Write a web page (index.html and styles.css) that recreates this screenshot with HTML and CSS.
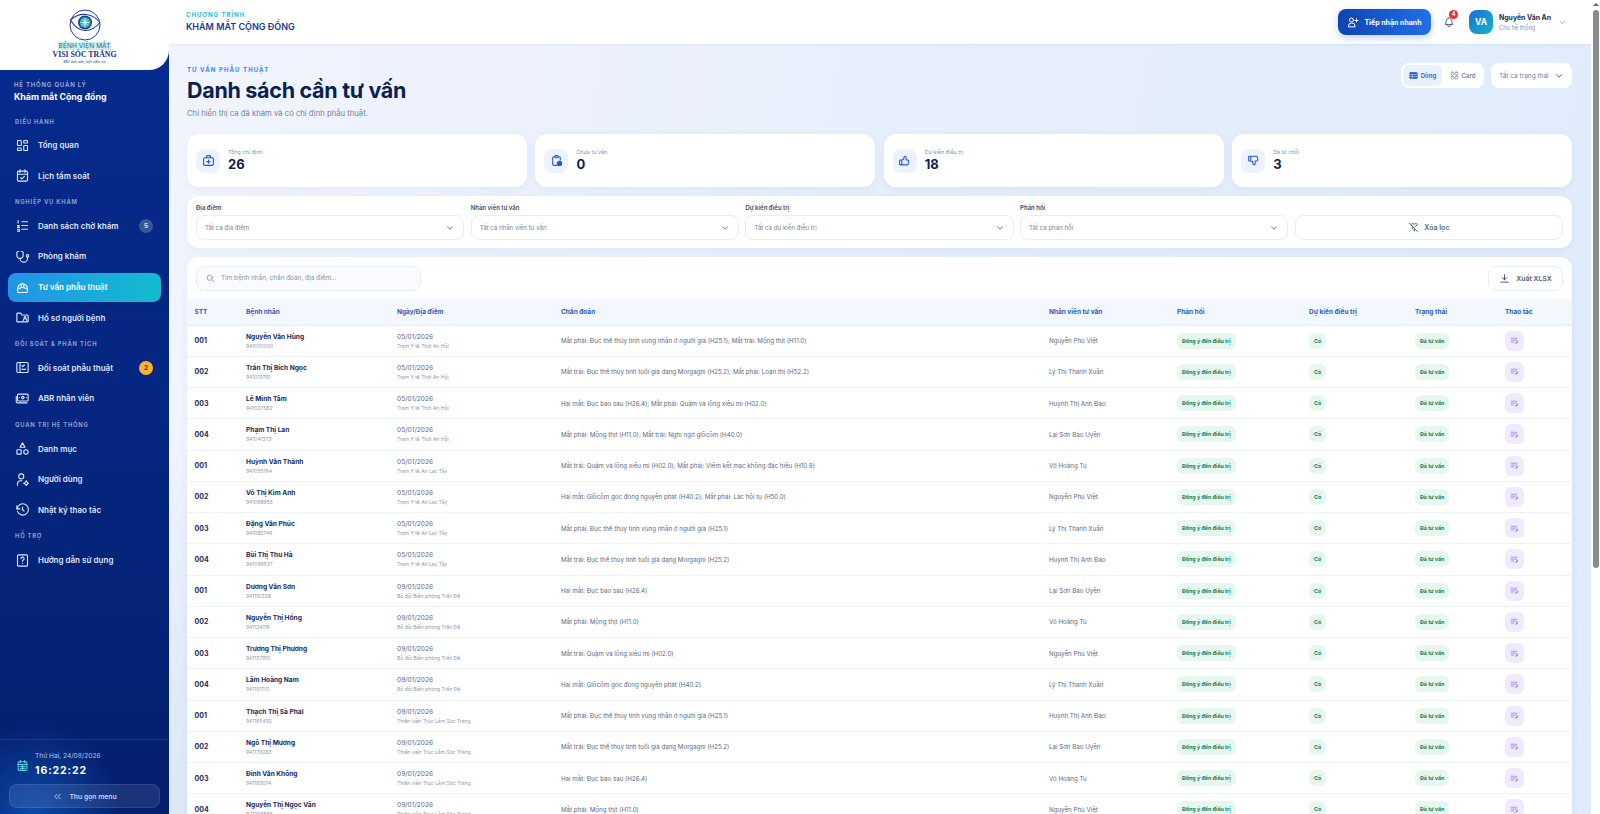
FILE: index.html
```html
<!DOCTYPE html>
<html lang="vi">
<head>
    <meta charset="UTF-8">
    <title>Danh sách cần tư vấn | Khám mắt Cộng đồng</title>
    <link rel="stylesheet" href="styles.css">
</head>
<body>
<svg class="sprite" xmlns="http://www.w3.org/2000/svg">
    <symbol id="i-dash" viewBox="0 0 24 24"><rect x="4" y="4" width="6" height="8" rx="1"/><rect x="14" y="4" width="6" height="4" rx="1"/><rect x="14" y="12" width="6" height="8" rx="1"/><rect x="4" y="16" width="6" height="4" rx="1"/></symbol>
    <symbol id="i-cal" viewBox="0 0 24 24"><rect x="4" y="5" width="16" height="16" rx="2"/><path d="M8 3v4M16 3v4M4 10h16M9 15.500l2 2 4-4"/></symbol>
    <symbol id="i-calgrid" viewBox="0 0 24 24"><rect x="4" y="5" width="16" height="16" rx="2"/><path d="M8 3v4M16 3v4M4 10h16M8 14h8M8 17.500h8M12 12v7"/></symbol>
    <symbol id="i-list" viewBox="0 0 24 24"><path d="M11 6h9M11 12h9M11 18h9M5 4v4M4 12h3l-3 3h3M4 18h3v3H4"/></symbol>
    <symbol id="i-steth" viewBox="0 0 24 24"><path d="M6 4H5a2 2 0 0 0-2 2v4a5 5 0 0 0 10 0V6a2 2 0 0 0-2-2h-1"/><path d="M8 15a6 6 0 0 0 12 0v-2"/><circle cx="20" cy="11" r="2"/></symbol>
    <symbol id="i-surg" viewBox="0 0 24 24"><path d="M5 20a8 8 0 0 1-1-5c0-5 3.500-9 8-9s8 4 8 9a8 8 0 0 1-1 5"/><path d="M4 15c3-2 5-3 8-3s5 1 8 3"/><path d="M5 20h14M10 6v6M14 6v6"/></symbol>
    <symbol id="i-folder" viewBox="0 0 24 24"><path d="M4 5h5l2 3h9a1 1 0 0 1 1 1v9a1 1 0 0 1-1 1H4a1 1 0 0 1-1-1V6a1 1 0 0 1 1-1z"/><circle cx="16" cy="12" r="1.500"/><path d="M13 17a3 3 0 0 1 6 0"/></symbol>
    <symbol id="i-audit" viewBox="0 0 24 24"><rect x="3" y="4" width="18" height="16" rx="1.500"/><path d="M8 4v16M11 9l1.500 1.500L15 8M11 15h6"/></symbol>
    <symbol id="i-cash" viewBox="0 0 24 24"><rect x="4" y="5" width="17" height="11" rx="1.500"/><circle cx="12.500" cy="10.500" r="2"/><path d="M7 10.500h.01M18 10.500h.01M2 9v8a2 2 0 0 0 2 2h15"/></symbol>
    <symbol id="i-cat" viewBox="0 0 24 24"><path d="M12 3l4 7H8z"/><rect x="3" y="14" width="7" height="7" rx="1"/><circle cx="17.500" cy="17.500" r="3.500"/></symbol>
    <symbol id="i-usercog" viewBox="0 0 24 24"><circle cx="10" cy="7" r="4"/><path d="M4 21v-2a5 5 0 0 1 5-5h2"/><circle cx="18" cy="18" r="2.500"/><path d="M18 13.500v2M18 20.500v1M13.500 18h2M20.500 18h1"/></symbol>
    <symbol id="i-hist" viewBox="0 0 24 24"><path d="M12 8v4l2.500 2.500"/><path d="M3.500 11a9 9 0 1 1 .5 4"/><path d="M3 6v5h5"/></symbol>
    <symbol id="i-help" viewBox="0 0 24 24"><rect x="4" y="3" width="16" height="18" rx="1.500"/><path d="M9.500 9a2.500 2.500 0 1 1 3.800 2.200c-.8.500-1.300 1-1.300 2M12 16.500h.01"/></symbol>
    <symbol id="i-userplus" viewBox="0 0 24 24"><circle cx="9" cy="8" r="4"/><path d="M3 21v-1a6 6 0 0 1 6-6h1a6 6 0 0 1 6 6v1zM19 6v6M16 9h6"/></symbol>
    <symbol id="i-bell" viewBox="0 0 24 24"><path d="M10 5a2 2 0 1 1 4 0 7 7 0 0 1 4 6v3a4 4 0 0 0 2 3H4a4 4 0 0 0 2-3v-3a7 7 0 0 1 4-6M9 17v1a3 3 0 0 0 6 0v-1"/></symbol>
    <symbol id="i-down" viewBox="0 0 24 24"><path d="M6 9l6 6 6-6"/></symbol>
    <symbol id="i-dbl" viewBox="0 0 24 24"><path d="M11 7l-5 5 5 5M18 7l-5 5 5 5"/></symbol>
    <symbol id="i-case" viewBox="0 0 24 24"><rect x="3" y="7" width="18" height="14" rx="2"/><path d="M8 7V5a2 2 0 0 1 2-2h4a2 2 0 0 1 2 2v2M12 11v6M9 14h6"/></symbol>
    <symbol id="i-clock" viewBox="0 0 24 24"><path d="M9 5H7a2 2 0 0 0-2 2v12a2 2 0 0 0 2 2h5M15 5h2a2 2 0 0 1 2 2v4"/><rect x="9" y="3" width="6" height="4" rx="1.500"/><circle cx="17.500" cy="17.500" r="4" fill="currentColor"/></symbol>
    <symbol id="i-up" viewBox="0 0 24 24"><path d="M7 11v9H4a1 1 0 0 1-1-1v-7a1 1 0 0 1 1-1h3a4 4 0 0 0 4-4V6a2 2 0 0 1 4 0v5h3a2 2 0 0 1 2 2l-1 5a2 3 0 0 1-2 2h-7a3 3 0 0 1-3-3"/></symbol>
    <symbol id="i-thdown" viewBox="0 0 24 24"><path d="M7 13V4H4a1 1 0 0 0-1 1v7a1 1 0 0 0 1 1h3a4 4 0 0 1 4 4v1a2 2 0 0 0 4 0v-5h3a2 2 0 0 0 2-2l-1-5a2 3 0 0 0-2-2h-7a3 3 0 0 0-3 3"/></symbol>
    <symbol id="i-filteroff" viewBox="0 0 24 24"><path d="M8 4h12v2l-5 5.500M12 12.500l-3-3.500-4-5M9.500 11.500V15l5 5v-6M3 3l18 18"/></symbol>
    <symbol id="i-search" viewBox="0 0 24 24"><circle cx="10" cy="10" r="7"/><path d="M21 21l-6-6"/></symbol>
    <symbol id="i-dl" viewBox="0 0 24 24"><path d="M4 20h16M12 4v11M7 10l5 5 5-5"/></symbol>
    <symbol id="i-table" viewBox="0 0 24 24"><rect x="2" y="4" width="20" height="16" rx="2" fill="currentColor"/><path d="M2 9.500h20M2 14.500h20M8.500 9.500V20" stroke="#e9f1fe" stroke-width="1.200"/></symbol>
    <symbol id="i-grid" viewBox="0 0 24 24"><rect x="3" y="3" width="7.500" height="7.500" rx="3"/><rect x="13.500" y="3" width="7.500" height="7.500" rx="3"/><rect x="3" y="13.500" width="7.500" height="7.500" rx="3"/><rect x="13.500" y="13.500" width="7.500" height="7.500" rx="3"/></symbol>
    <symbol id="i-note" viewBox="0 0 24 24"><path d="M3 6h15M3 11h15M3 16h7"/><path d="M14 21l.8-3.200 5-5 2.400 2.400-5 5z" fill="currentColor" stroke="none"/></symbol>
</svg>
<div class="app">
    <aside class="sidebar">
        <div class="logo">
            <svg class="logo-mark" viewBox="0 0 32 32">
                <circle cx="16" cy="16" r="15" fill="none" stroke="#1f3a9e" stroke-width="1"/>
                <path d="M1.500 11C7 6 12 5 17 5.500c5 .5 10 3 14 8-4 5-9 8-15 8C10 21.500 5 17 1.500 11z" fill="#fff" stroke="#1f3a9e" stroke-width="1.100"/>
                <circle cx="16" cy="13.500" r="7" fill="#1f3a9e"/>
                <circle cx="16" cy="13.500" r="5.400" fill="#22b8a6"/>
                <path d="M16 9v9M11.500 13.500h9M13 10.500l6 6M19 10.500l-6 6" stroke="#fff" stroke-width=".9"/>
            </svg>
            <div class="logo-top">BỆNH VIỆN MẮT</div>
            <div class="logo-name">VISI SÓC TRĂNG</div>
            <div class="logo-tag">Mỗi ánh mắt, một niềm tin</div>
        </div>
        <div class="brand">
            <div class="brand-sub">HỆ THỐNG QUẢN LÝ</div>
            <div class="brand-name">Khám mắt Cộng đồng</div>
        </div>
        <nav class="nav">
            <div class="nav-title">ĐIỀU HÀNH</div>
            <a class="nav-item"><svg class="ic"><use href="#i-dash"/></svg>Tổng quan</a>
            <a class="nav-item"><svg class="ic"><use href="#i-cal"/></svg>Lịch tầm soát</a>
            <div class="nav-title">NGHIỆP VỤ KHÁM</div>
            <a class="nav-item"><svg class="ic"><use href="#i-list"/></svg>Danh sách chờ khám<span class="count">5</span></a>
            <a class="nav-item"><svg class="ic"><use href="#i-steth"/></svg>Phòng khám</a>
            <a class="nav-item active"><svg class="ic"><use href="#i-surg"/></svg>Tư vấn phẫu thuật</a>
            <a class="nav-item"><svg class="ic"><use href="#i-folder"/></svg>Hồ sơ người bệnh</a>
            <div class="nav-title">ĐỐI SOÁT &amp; PHÂN TÍCH</div>
            <a class="nav-item"><svg class="ic"><use href="#i-audit"/></svg>Đối soát phẫu thuật<span class="count warn">2</span></a>
            <a class="nav-item"><svg class="ic"><use href="#i-cash"/></svg>ABR nhân viên</a>
            <div class="nav-title">QUẢN TRỊ HỆ THỐNG</div>
            <a class="nav-item"><svg class="ic"><use href="#i-cat"/></svg>Danh mục</a>
            <a class="nav-item"><svg class="ic"><use href="#i-usercog"/></svg>Người dùng</a>
            <a class="nav-item"><svg class="ic"><use href="#i-hist"/></svg>Nhật ký thao tác</a>
            <div class="nav-title">HỖ TRỢ</div>
            <a class="nav-item"><svg class="ic"><use href="#i-help"/></svg>Hướng dẫn sử dụng</a>
        </nav>
        <div class="side-foot">
            <div class="clock">
                <svg class="ic clock-ic"><use href="#i-calgrid"/></svg>
                <div>
                    <div class="clock-date">Thứ Hai, 24/08/2026</div>
                    <div class="clock-time">16:22:22</div>
                </div>
            </div>
            <button class="collapse"><svg class="ic"><use href="#i-dbl"/></svg>Thu gọn menu</button>
        </div>
    </aside>

    <main class="main">
        <header class="topbar">
            <div>
                <div class="prog-sub">CHƯƠNG TRÌNH</div>
                <div class="prog-name">KHÁM MẮT CỘNG ĐỒNG</div>
            </div>
            <div class="top-right">
                <button class="quick"><svg class="ic"><use href="#i-userplus"/></svg>Tiếp nhận nhanh</button>
                <div class="bell"><svg class="ic"><use href="#i-bell"/></svg><span class="bell-badge">4</span></div>
                <div class="avatar">VA</div>
                <div class="user">
                    <div class="user-name">Nguyễn Văn An</div>
                    <div class="user-role">Chủ hệ thống</div>
                </div>
                <svg class="ic user-caret"><use href="#i-down"/></svg>
            </div>
        </header>

        <div class="content">
            <div class="page-head">
                <div>
                    <div class="eyebrow">TƯ VẤN PHẪU THUẬT</div>
                    <h1>Danh sách cần tư vấn</h1>
                    <p class="lead">Chỉ hiển thị ca đã khám và có chỉ định phẫu thuật.</p>
                </div>
                <div class="head-tools">
                    <div class="toggle">
                        <span class="tg on"><svg class="ic"><use href="#i-table"/></svg>Dòng</span>
                        <span class="tg"><svg class="ic"><use href="#i-grid"/></svg>Card</span>
                    </div>
                    <div class="status-sel">Tất cả trạng thái<svg class="ic"><use href="#i-down"/></svg></div>
                </div>
            </div>

            <section class="stats">
                <div class="stat"><span class="stat-ic"><svg class="ic"><use href="#i-case"/></svg></span><div><div class="stat-label">Tổng chỉ định</div><div class="stat-val">26</div></div></div>
                <div class="stat"><span class="stat-ic"><svg class="ic"><use href="#i-clock"/></svg></span><div><div class="stat-label">Chưa tư vấn</div><div class="stat-val">0</div></div></div>
                <div class="stat"><span class="stat-ic"><svg class="ic"><use href="#i-up"/></svg></span><div><div class="stat-label">Dự kiến điều trị</div><div class="stat-val">18</div></div></div>
                <div class="stat"><span class="stat-ic"><svg class="ic"><use href="#i-thdown"/></svg></span><div><div class="stat-label">Đã từ chối</div><div class="stat-val">3</div></div></div>
            </section>

            <section class="filters">
                <div><label>Địa điểm</label><div class="sel">Tất cả địa điểm<svg class="ic"><use href="#i-down"/></svg></div></div>
                <div><label>Nhân viên tư vấn</label><div class="sel">Tất cả nhân viên tư vấn<svg class="ic"><use href="#i-down"/></svg></div></div>
                <div><label>Dự kiến điều trị</label><div class="sel">Tất cả dự kiến điều trị<svg class="ic"><use href="#i-down"/></svg></div></div>
                <div><label>Phản hồi</label><div class="sel">Tất cả phản hồi<svg class="ic"><use href="#i-down"/></svg></div></div>
                <div class="clear-wrap"><button class="clear"><svg class="ic"><use href="#i-filteroff"/></svg>Xóa lọc</button></div>
            </section>

            <section class="list">
                <div class="list-tools">
                    <div class="search"><svg class="ic"><use href="#i-search"/></svg>Tìm bệnh nhân, chẩn đoán, địa điểm...</div>
                    <button class="export"><svg class="ic"><use href="#i-dl"/></svg>Xuất XLSX</button>
                </div>
                <table>
                    <thead>
                        <tr><th class="c-stt">STT</th><th class="c-pt">Bệnh nhân</th><th class="c-date">Ngày/Địa điểm</th><th class="c-dx">Chẩn đoán</th><th class="c-nv">Nhân viên tư vấn</th><th class="c-ph">Phản hồi</th><th class="c-dk">Dự kiến điều trị</th><th class="c-st">Trạng thái</th><th>Thao tác</th></tr>
                    </thead>
                    <tbody>
<tr><td class="stt">001</td><td><b>Nguyễn Văn Hùng</b><small>941000000</small></td><td><i>05/01/2026</i><small>Trạm Y tế Thới An Hội</small></td><td>Mắt phải: Đục thể thủy tinh vùng nhân ở người già (H25.1); Mắt trái: Mộng thịt (H11.0)</td><td>Nguyễn Phú Việt</td><td><span class="tag">Đồng ý đến điều trị</span></td><td><span class="tag">Có</span></td><td><span class="tag">Đã tư vấn</span></td><td><span class="act"><svg class="ic"><use href="#i-note"/></svg></span></td></tr>
<tr><td class="stt">002</td><td><b>Trần Thị Bích Ngọc</b><small>941013791</small></td><td><i>05/01/2026</i><small>Trạm Y tế Thới An Hội</small></td><td>Mắt trái: Đục thể thủy tinh tuổi già dạng Morgagni (H25.2); Mắt phải: Loạn thị (H52.2)</td><td>Lý Thị Thanh Xuân</td><td><span class="tag">Đồng ý đến điều trị</span></td><td><span class="tag">Có</span></td><td><span class="tag">Đã tư vấn</span></td><td><span class="act"><svg class="ic"><use href="#i-note"/></svg></span></td></tr>
<tr><td class="stt">003</td><td><b>Lê Minh Tâm</b><small>941027582</small></td><td><i>05/01/2026</i><small>Trạm Y tế Thới An Hội</small></td><td>Hai mắt: Đục bao sau (H26.4); Mắt phải: Quặm và lông xiêu mi (H02.0)</td><td>Huỳnh Thị Anh Đào</td><td><span class="tag">Đồng ý đến điều trị</span></td><td><span class="tag">Có</span></td><td><span class="tag">Đã tư vấn</span></td><td><span class="act"><svg class="ic"><use href="#i-note"/></svg></span></td></tr>
<tr><td class="stt">004</td><td><b>Phạm Thị Lan</b><small>941041373</small></td><td><i>05/01/2026</i><small>Trạm Y tế Thới An Hội</small></td><td>Mắt phải: Mộng thịt (H11.0); Mắt trái: Nghi ngờ glôcôm (H40.0)</td><td>Lại Sơn Bảo Uyên</td><td><span class="tag">Đồng ý đến điều trị</span></td><td><span class="tag">Có</span></td><td><span class="tag">Đã tư vấn</span></td><td><span class="act"><svg class="ic"><use href="#i-note"/></svg></span></td></tr>
<tr><td class="stt">001</td><td><b>Huỳnh Văn Thành</b><small>941055164</small></td><td><i>05/01/2026</i><small>Trạm Y tế An Lạc Tây</small></td><td>Mắt trái: Quặm và lông xiêu mi (H02.0); Mắt phải: Viêm kết mạc không đặc hiệu (H10.9)</td><td>Võ Hoàng Tú</td><td><span class="tag">Đồng ý đến điều trị</span></td><td><span class="tag">Có</span></td><td><span class="tag">Đã tư vấn</span></td><td><span class="act"><svg class="ic"><use href="#i-note"/></svg></span></td></tr>
<tr><td class="stt">002</td><td><b>Võ Thị Kim Anh</b><small>941068955</small></td><td><i>05/01/2026</i><small>Trạm Y tế An Lạc Tây</small></td><td>Hai mắt: Glôcôm góc đóng nguyên phát (H40.2); Mắt phải: Lác hội tụ (H50.0)</td><td>Nguyễn Phú Việt</td><td><span class="tag">Đồng ý đến điều trị</span></td><td><span class="tag">Có</span></td><td><span class="tag">Đã tư vấn</span></td><td><span class="act"><svg class="ic"><use href="#i-note"/></svg></span></td></tr>
<tr><td class="stt">003</td><td><b>Đặng Văn Phúc</b><small>941082746</small></td><td><i>05/01/2026</i><small>Trạm Y tế An Lạc Tây</small></td><td>Mắt phải: Đục thể thủy tinh vùng nhân ở người già (H25.1)</td><td>Lý Thị Thanh Xuân</td><td><span class="tag">Đồng ý đến điều trị</span></td><td><span class="tag">Có</span></td><td><span class="tag">Đã tư vấn</span></td><td><span class="act"><svg class="ic"><use href="#i-note"/></svg></span></td></tr>
<tr><td class="stt">004</td><td><b>Bùi Thị Thu Hà</b><small>941096537</small></td><td><i>05/01/2026</i><small>Trạm Y tế An Lạc Tây</small></td><td>Mắt trái: Đục thể thủy tinh tuổi già dạng Morgagni (H25.2)</td><td>Huỳnh Thị Anh Đào</td><td><span class="tag">Đồng ý đến điều trị</span></td><td><span class="tag">Có</span></td><td><span class="tag">Đã tư vấn</span></td><td><span class="act"><svg class="ic"><use href="#i-note"/></svg></span></td></tr>
<tr><td class="stt">001</td><td><b>Dương Văn Sơn</b><small>941110328</small></td><td><i>09/01/2026</i><small>Bộ đội Biên phòng Trần Đề</small></td><td>Hai mắt: Đục bao sau (H26.4)</td><td>Lại Sơn Bảo Uyên</td><td><span class="tag">Đồng ý đến điều trị</span></td><td><span class="tag">Có</span></td><td><span class="tag">Đã tư vấn</span></td><td><span class="act"><svg class="ic"><use href="#i-note"/></svg></span></td></tr>
<tr><td class="stt">002</td><td><b>Nguyễn Thị Hồng</b><small>941124119</small></td><td><i>09/01/2026</i><small>Bộ đội Biên phòng Trần Đề</small></td><td>Mắt phải: Mộng thịt (H11.0)</td><td>Võ Hoàng Tú</td><td><span class="tag">Đồng ý đến điều trị</span></td><td><span class="tag">Có</span></td><td><span class="tag">Đã tư vấn</span></td><td><span class="act"><svg class="ic"><use href="#i-note"/></svg></span></td></tr>
<tr><td class="stt">003</td><td><b>Trương Thị Phương</b><small>941137910</small></td><td><i>09/01/2026</i><small>Bộ đội Biên phòng Trần Đề</small></td><td>Mắt trái: Quặm và lông xiêu mi (H02.0)</td><td>Nguyễn Phú Việt</td><td><span class="tag">Đồng ý đến điều trị</span></td><td><span class="tag">Có</span></td><td><span class="tag">Đã tư vấn</span></td><td><span class="act"><svg class="ic"><use href="#i-note"/></svg></span></td></tr>
<tr><td class="stt">004</td><td><b>Lâm Hoàng Nam</b><small>941151701</small></td><td><i>09/01/2026</i><small>Bộ đội Biên phòng Trần Đề</small></td><td>Hai mắt: Glôcôm góc đóng nguyên phát (H40.2)</td><td>Lý Thị Thanh Xuân</td><td><span class="tag">Đồng ý đến điều trị</span></td><td><span class="tag">Có</span></td><td><span class="tag">Đã tư vấn</span></td><td><span class="act"><svg class="ic"><use href="#i-note"/></svg></span></td></tr>
<tr><td class="stt">001</td><td><b>Thạch Thị Sà Phal</b><small>941165492</small></td><td><i>09/01/2026</i><small>Thiền viện Trúc Lâm Sóc Trăng</small></td><td>Mắt phải: Đục thể thủy tinh vùng nhân ở người già (H25.1)</td><td>Huỳnh Thị Anh Đào</td><td><span class="tag">Đồng ý đến điều trị</span></td><td><span class="tag">Có</span></td><td><span class="tag">Đã tư vấn</span></td><td><span class="act"><svg class="ic"><use href="#i-note"/></svg></span></td></tr>
<tr><td class="stt">002</td><td><b>Ngô Thị Mương</b><small>941179283</small></td><td><i>09/01/2026</i><small>Thiền viện Trúc Lâm Sóc Trăng</small></td><td>Mắt trái: Đục thể thủy tinh tuổi già dạng Morgagni (H25.2)</td><td>Lại Sơn Bảo Uyên</td><td><span class="tag">Đồng ý đến điều trị</span></td><td><span class="tag">Có</span></td><td><span class="tag">Đã tư vấn</span></td><td><span class="act"><svg class="ic"><use href="#i-note"/></svg></span></td></tr>
<tr><td class="stt">003</td><td><b>Đinh Văn Không</b><small>941193074</small></td><td><i>09/01/2026</i><small>Thiền viện Trúc Lâm Sóc Trăng</small></td><td>Hai mắt: Đục bao sau (H26.4)</td><td>Võ Hoàng Tú</td><td><span class="tag">Đồng ý đến điều trị</span></td><td><span class="tag">Có</span></td><td><span class="tag">Đã tư vấn</span></td><td><span class="act"><svg class="ic"><use href="#i-note"/></svg></span></td></tr>
<tr><td class="stt">004</td><td><b>Nguyễn Thị Ngọc Vân</b><small>941206865</small></td><td><i>09/01/2026</i><small>Thiền viện Trúc Lâm Sóc Trăng</small></td><td>Mắt phải: Mộng thịt (H11.0)</td><td>Nguyễn Phú Việt</td><td><span class="tag">Đồng ý đến điều trị</span></td><td><span class="tag">Có</span></td><td><span class="tag">Đã tư vấn</span></td><td><span class="act"><svg class="ic"><use href="#i-note"/></svg></span></td></tr>
                    </tbody>
                </table>
            </section>
        </div>
    </main>

    <div class="scrollbar">
        <span class="scroll-arrow"></span>
        <span class="scroll-thumb"></span>
    </div>
</div>
</body>
</html>
```

FILE: styles.css
```css
* {
    box-sizing: border-box;
}
html, body {
    height: 100%;
    margin: 0;
    padding: 0;
    font-family: Inter, "Noto Sans", sans-serif;
    color: #1c2b55;
}
.sprite {
    display: none;
}
.ic {
    width: 14px;
    height: 14px;
    flex: none;
    fill: none;
    stroke: currentColor;
    stroke-width: 2;
    stroke-linecap: round;
    stroke-linejoin: round;
}
.app {
    display: flex;
    height: 100vh;
    overflow: hidden;
    background:
        radial-gradient(circle at 0 100%, #cfe2f0 0, rgba(207, 226, 240, 0) 420px),
        linear-gradient(100deg, #f3f6fe 0, #e9effb 45%, #dfebfc 100%);
}

/* sidebar */
.sidebar {
    width: 169px;
    flex: none;
    display: flex;
    flex-direction: column;
    color: #e4eaf8;
    background:
        radial-gradient(circle at 20% 100%, #0b4aa8 0, rgba(11, 74, 168, 0) 90px),
        linear-gradient(180deg, #062b90 0, #05267f 55%, #041f6c 100%);
}
.logo {
    height: 70px;
    flex: none;
    background: #fff;
    border-bottom-right-radius: 20px;
    display: flex;
    flex-direction: column;
    align-items: center;
    padding-top: 9px;
}
.logo-mark {
    width: 32px;
    height: 32px;
    flex: none;
}
.logo-top {
    margin-top: 1px;
    font-size: 6.5px;
    line-height: 8px;
    letter-spacing: .1px;
    color: #2b6d9b;
    background: #c9efe8;
    padding: 0 1px;
}
.logo-name {
    font-family: "Liberation Serif", serif;
    font-weight: 700;
    font-size: 7.8px;
    line-height: 9px;
    color: #1c2f86;
}
.logo-tag {
    font-family: "Liberation Serif", serif;
    font-style: italic;
    font-size: 4px;
    line-height: 6px;
    color: #1c2f86;
}
.brand {
    padding: 11px 14px 0;
}
.brand-sub {
    font-size: 6px;
    line-height: 8px;
    font-weight: 600;
    letter-spacing: .8px;
    color: #a3b3d8;
}
.brand-name {
    margin-top: 2px;
    font-size: 8.8px;
    line-height: 12px;
    font-weight: 700;
    color: #fff;
}
.nav {
    padding: 13.500px 8px 0;
    display: flex;
    flex-direction: column;
    gap: 1.600px;
}
.nav-title {
    height: 9px;
    line-height: 9px;
    margin: 5.500px 0 3.500px;
    padding-left: 7px;
    font-size: 5.8px;
    font-weight: 700;
    letter-spacing: .8px;
    color: #8b9dcb;
}
.nav-title:first-child {
    margin-top: 0;
}
.nav-item {
    height: 29px;
    display: flex;
    align-items: center;
    gap: 8px;
    padding: 0 8px 0 7px;
    border-radius: 8px;
    font-size: 8px;
    font-weight: 600;
    color: #dfe6f6;
}
.nav-item .ic {
    width: 15px;
    height: 15px;
    stroke-width: 1.800;
}
.nav-item.active {
    color: #fff;
    background: linear-gradient(90deg, #2194e8 0, #12bccf 100%);
    box-shadow: 0 3px 9px rgba(12, 30, 110, .35);
}
.count {
    margin-left: auto;
    width: 14px;
    height: 14px;
    border-radius: 50%;
    background: #3a5598;
    color: #dfe6f6;
    font-size: 6.5px;
    font-weight: 700;
    line-height: 14px;
    text-align: center;
}
.count.warn {
    background: #f9b233;
    color: #5b3a00;
}
.side-foot {
    margin-top: auto;
    padding: 0 9px 6px;
    border-top: 1px solid rgba(255, 255, 255, .1);
}
.clock {
    display: flex;
    align-items: center;
    gap: 6px;
    padding: 12px 0 0 7px;
}
.clock-ic {
    width: 13px;
    height: 13px;
    color: #58d3ea;
}
.clock-date {
    font-size: 6.6px;
    line-height: 9px;
    color: #b8c5e4;
}
.clock-time {
    margin-top: 2px;
    font-size: 10.5px;
    line-height: 15px;
    font-weight: 700;
    letter-spacing: .9px;
    color: #fff;
}
.collapse {
    width: 100%;
    height: 24px;
    margin-top: 6px;
    display: flex;
    align-items: center;
    justify-content: center;
    gap: 6px;
    border: 1px solid rgba(255, 255, 255, .1);
    border-radius: 8px;
    background: rgba(255, 255, 255, .09);
    font-family: inherit;
    font-size: 6.8px;
    font-weight: 600;
    color: #c9d4ec;
}
.collapse .ic {
    width: 11px;
    height: 11px;
}

/* main column */
.main {
    flex: 1;
    min-width: 0;
    height: 100%;
    overflow: hidden;
}
.scrollbar {
    width: 9px;
    flex: none;
    display: flex;
    flex-direction: column;
    align-items: center;
    padding-top: 3px;
    background: #fff;
}
.scroll-arrow {
    width: 0;
    height: 0;
    border-left: 3px solid transparent;
    border-right: 3px solid transparent;
    border-bottom: 3px solid #666;
}
.scroll-thumb {
    width: 6px;
    height: 558px;
    margin-top: 4px;
    border-radius: 3px;
    background: #8b8b8b;
}
.topbar {
    height: 44px;
    display: flex;
    align-items: center;
    justify-content: space-between;
    padding: 0 24px 0 17px;
    background: #fff;
    box-shadow: 0 1px 2px rgba(30, 60, 130, .06);
}
.prog-sub {
    font-size: 6px;
    line-height: 8px;
    font-weight: 700;
    letter-spacing: 1px;
    color: #1fbecf;
}
.prog-name {
    margin-top: 2px;
    font-size: 9px;
    line-height: 12px;
    font-weight: 600;
    color: #193a8c;
}
.top-right {
    display: flex;
    align-items: center;
}
.quick {
    width: 93px;
    height: 26px;
    display: flex;
    align-items: center;
    justify-content: center;
    gap: 5px;
    border: 0;
    border-radius: 8px;
    background: linear-gradient(90deg, #0f43b4, #2170e6);
    box-shadow: 0 3px 8px rgba(24, 80, 190, .25);
    color: #fff;
    font-family: inherit;
    font-size: 7px;
    font-weight: 700;
}
.quick .ic {
    width: 12px;
    height: 12px;
}
.bell {
    position: relative;
    width: 14px;
    height: 14px;
    margin: 0 13px 0 11px;
    color: #5a6a88;
}
.bell .ic {
    display: block;
    width: 12px;
    height: 14px;
    margin-left: 1px;
}
.bell-badge {
    position: absolute;
    top: -5px;
    left: 7px;
    width: 9px;
    height: 9px;
    border-radius: 50%;
    background: #ef2d3c;
    color: #fff;
    font-size: 5.5px;
    font-weight: 700;
    line-height: 9px;
    text-align: center;
}
.avatar {
    width: 24px;
    height: 24px;
    border-radius: 8px;
    background: linear-gradient(135deg, #1b6fd8, #14b5c9);
    color: #fff;
    font-size: 8.5px;
    font-weight: 700;
    line-height: 24px;
    text-align: center;
}
.user {
    margin-left: 6px;
    width: 59px;
}
.user-name {
    font-size: 6.9px;
    line-height: 10px;
    font-weight: 700;
    color: #1c2b55;
    white-space: nowrap;
}
.user-role {
    font-size: 5.7px;
    line-height: 9px;
    color: #8793aa;
}
.user-caret {
    width: 9px;
    height: 9px;
    color: #8793aa;
}
.content {
    padding: 19px 19px 0 18px;
}
.page-head {
    height: 71px;
    display: flex;
    justify-content: space-between;
}
.eyebrow {
    padding-top: 2.500px;
    font-size: 6px;
    line-height: 8px;
    font-weight: 700;
    letter-spacing: 1.100px;
    color: #3d84f5;
    box-sizing: content-box;
}
h1 {
    margin: 1.500px 0 0;
    font-size: 21.5px;
    line-height: 30px;
    font-weight: 700;
    letter-spacing: -.3px;
    color: #0b1f52;
}
.lead {
    margin: 3px 0 0;
    font-size: 7.7px;
    line-height: 12px;
    color: #7484a0;
}
.head-tools {
    display: flex;
    gap: 7px;
    height: 25px;
}
.toggle {
    width: 83px;
    display: flex;
    gap: 1px;
    padding: 2px;
    background: #fff;
    border-radius: 8px;
}
.tg {
    flex: 1;
    display: flex;
    align-items: center;
    justify-content: center;
    gap: 3px;
    border-radius: 6px;
    font-size: 6px;
    font-weight: 600;
    color: #76839c;
}
.tg .ic {
    width: 9px;
    height: 9px;
    stroke-width: 2;
}
.tg.on {
    background: #e9f1fe;
    color: #2b62cf;
}
.status-sel {
    width: 81px;
    display: flex;
    align-items: center;
    justify-content: space-between;
    padding: 0 8px;
    background: #fff;
    border-radius: 8px;
    font-size: 6.5px;
    color: #76839c;
}
.status-sel .ic {
    width: 10px;
    height: 10px;
    color: #31456f;
}
.stats {
    display: grid;
    grid-template-columns: repeat(4, 1fr);
    gap: 8.500px;
}
.stat {
    height: 53px;
    display: flex;
    align-items: center;
    gap: 8px;
    padding: 0 9px;
    background: #fff;
    border-radius: 12px;
    box-shadow: 0 2px 8px rgba(40, 80, 160, .06);
}
.stat-ic {
    width: 24px;
    height: 24px;
    display: flex;
    align-items: center;
    justify-content: center;
    border-radius: 8px;
    background: #edf3fe;
    color: #2358cf;
}
.stat-ic .ic {
    width: 13px;
    height: 13px;
}
.stat-label {
    font-size: 5.400px;
    line-height: 8px;
    color: #8793aa;
}
.stat-val {
    margin-bottom: 2px;
    font-size: 13px;
    line-height: 16px;
    font-weight: 700;
    color: #0f2150;
}
.filters {
    margin-top: 9px;
    height: 52px;
    display: grid;
    grid-template-columns: repeat(5, 1fr);
    gap: 6.500px;
    padding: 7px 9px 8px;
    background: #fff;
    border-radius: 12px;
    box-shadow: 0 2px 8px rgba(40, 80, 160, .06);
}
.filters label {
    display: block;
    height: 12px;
    font-size: 6px;
    line-height: 10px;
    font-weight: 600;
    color: #3d4a68;
}
.sel {
    height: 25px;
    display: flex;
    align-items: center;
    justify-content: space-between;
    padding: 0 8px;
    border: 1px solid #e6ecf8;
    border-radius: 8px;
    font-size: 6.1px;
    color: #76839c;
}
.sel .ic {
    width: 10px;
    height: 10px;
    color: #4b5a7a;
}
.clear-wrap {
    display: flex;
    align-items: flex-end;
}
.clear {
    width: 100%;
    height: 25px;
    display: flex;
    align-items: center;
    justify-content: center;
    gap: 5px;
    background: #fff;
    border: 1px solid #e6ecf8;
    border-radius: 8px;
    font-family: inherit;
    font-size: 7px;
    font-weight: 600;
    color: #5d6a85;
}
.clear .ic {
    width: 11px;
    height: 11px;
}
.list {
    margin-top: 9px;
    background: #fff;
    border-radius: 12px;
    box-shadow: 0 2px 8px rgba(40, 80, 160, .06);
    overflow: hidden;
}
.list-tools {
    height: 42px;
    display: flex;
    align-items: center;
    justify-content: space-between;
    padding: 0 9px;
}
.search {
    width: 225px;
    height: 25px;
    display: flex;
    align-items: center;
    gap: 6px;
    padding: 0 9px;
    border: 1px solid #e6ecf8;
    border-radius: 8px;
    background: #fafbff;
    font-size: 6.4px;
    color: #8793aa;
}
.search .ic {
    width: 9px;
    height: 9px;
    color: #7b8aa6;
}
.export {
    width: 75px;
    height: 25px;
    display: flex;
    align-items: center;
    justify-content: center;
    gap: 6px;
    background: #fff;
    border: 1px solid #e6ecf8;
    border-radius: 8px;
    font-family: inherit;
    font-size: 6.8px;
    font-weight: 700;
    color: #5d6a85;
}
.export .ic {
    width: 11px;
    height: 11px;
    color: #3a4a6b;
}
table {
    width: 100%;
    table-layout: fixed;
    border-collapse: collapse;
}
th {
    height: 26px;
    padding: 0 7.500px;
    background: #f3f7fe;
    border-bottom: 1px solid #e6edf9;
    font-size: 6.5px;
    font-weight: 700;
    text-align: left;
    color: #2d5bc4;
}
.c-stt { width: 51.500px; }
.c-pt { width: 151px; }
.c-date { width: 164px; }
.c-dx { width: 488px; }
.c-nv { width: 128px; }
.c-ph { width: 132px; }
.c-dk { width: 106px; }
.c-st { width: 90px; }
td {
    height: 31.250px;
    padding: 0 7.500px;
    border-bottom: 1px solid #eef2f9;
    font-size: 6.200px;
    color: #5c6880;
    white-space: nowrap;
    overflow: hidden;
}
td.stt {
    font-size: 7px;
    font-weight: 700;
    color: #1c2b55;
}
td b {
    display: block;
    font-size: 6.600px;
    line-height: 10px;
    font-weight: 700;
    color: #1c2b55;
}
td i {
    display: block;
    font-style: normal;
    font-size: 6.600px;
    line-height: 10px;
}
td small {
    display: block;
    font-size: 5px;
    line-height: 8px;
    color: #8d99b0;
}
.tag {
    display: inline-block;
    height: 16px;
    padding: 0 5px;
    border-radius: 6px;
    background: #e6f7ef;
    color: #15805a;
    font-size: 5.300px;
    font-weight: 700;
    line-height: 16px;
}
.act {
    width: 19px;
    height: 20px;
    display: flex;
    align-items: center;
    justify-content: center;
    border-radius: 6px;
    background: #efeafe;
    color: #8f7ce0;
}
.act .ic {
    width: 9px;
    height: 9px;
}
```
